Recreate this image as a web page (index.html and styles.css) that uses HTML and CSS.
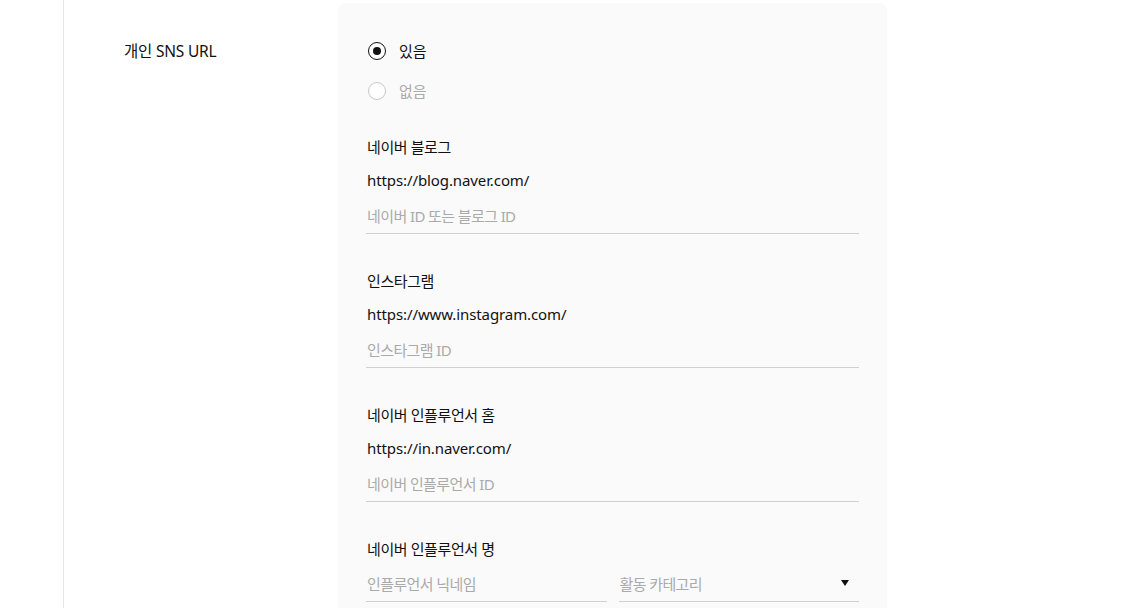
FILE: index.html
```html
<!DOCTYPE html>
<html lang="ko">
<head>
<meta charset="utf-8">
<link rel="stylesheet" href="styles.css">
</head>
<body>
<div class="page">
  <div class="row">
    <div class="row-label">개인 SNS URL</div>
    <div class="card">
      <div class="radios">
        <label class="radio checked"><span class="dot"></span><span class="radio-text">있음</span></label>
        <label class="radio"><span class="dot"></span><span class="radio-text">없음</span></label>
      </div>

      <div class="section">
        <div class="sec-label">네이버 블로그</div>
        <div class="prefix">https://blog.naver.com/</div>
        <div class="field"><span class="ph">네이버 ID 또는 블로그 ID</span></div>
      </div>

      <div class="section">
        <div class="sec-label">인스타그램</div>
        <div class="prefix">https://www.instagram.com/</div>
        <div class="field"><span class="ph">인스타그램 ID</span></div>
      </div>

      <div class="section">
        <div class="sec-label">네이버 인플루언서 홈</div>
        <div class="prefix">https://in.naver.com/</div>
        <div class="field"><span class="ph">네이버 인플루언서 ID</span></div>
      </div>

      <div class="section last">
        <div class="sec-label">네이버 인플루언서 명</div>
        <div class="pair">
          <div class="field"><span class="ph">인플루언서 닉네임</span></div>
          <div class="field select"><span class="ph">활동 카테고리</span><span class="caret"></span></div>
        </div>
      </div>
    </div>
  </div>
</div>
</body>
</html>
```

FILE: styles.css
```css
* { box-sizing: border-box; }
html, body { margin: 0; padding: 0; background: #fff; }
body {
  font-family: "Noto Sans", "Noto Sans CJK KR", sans-serif;
  font-size: 15px;
  color: #111;
  overflow: hidden;
  height: 608px;
}
.page {
  margin-left: 63px;
  border-left: 1px solid #e6e6e6;
  height: 608px;
  padding-left: 60px;
}
.row {
  display: flex;
  align-items: flex-start;
}
.row-label {
  width: 214px;
  padding-top: 41px;
  line-height: 20px;
  font-size: 15.5px;
  letter-spacing: -0.2px;
}
.card {
  margin-top: 3px;
  width: 549px;
  background: #fafafa;
  border-radius: 8px;
  padding: 28px 28px 40px 28px;
}
.radios {
  display: flex;
  flex-direction: column;
}
.radio {
  display: flex;
  align-items: center;
  height: 40px;
  padding-left: 2px;
  gap: 13px;
  color: #aaa;
}
.radio.checked { color: #111; }
.dot {
  width: 18px;
  height: 18px;
  border-radius: 50%;
  border: 1px solid #c8c8c8;
  background: #fff;
  display: flex;
  align-items: center;
  justify-content: center;
}
.radio.checked .dot {
  border: 1.5px solid #111;
}
.radio.checked .dot::after {
  content: "";
  width: 8px;
  height: 8px;
  border-radius: 50%;
  background: #111;
}
.radio-text { line-height: 20px; }
.section + .section { margin-top: 37px; }
.radios + .section { margin-top: 26px; }
.sec-label {
  line-height: 20px;
  padding-left: 1px;
  letter-spacing: -0.4px;
}
.prefix {
  margin-top: 13px;
  line-height: 20px;
  padding-left: 1px;
  letter-spacing: -0.1px;
}
.field {
  margin-top: 7px;
  height: 37px;
  border-bottom: 1px solid #d0d0d0;
  display: flex;
  align-items: center;
  padding-left: 1px;
}
.ph {
  color: #aaa;
  letter-spacing: -0.6px;
}
.section.last .pair {
  margin-top: 6px;
  display: grid;
  grid-template-columns: 1fr 1fr;
  gap: 12px;
}
.section.last .pair .field { margin-top: 0; }
.select {
  justify-content: space-between;
  padding-right: 10px;
}
.caret {
  width: 0;
  height: 0;
  border-left: 4px solid transparent;
  border-right: 4px solid transparent;
  border-top: 6px solid #111;
}
```
